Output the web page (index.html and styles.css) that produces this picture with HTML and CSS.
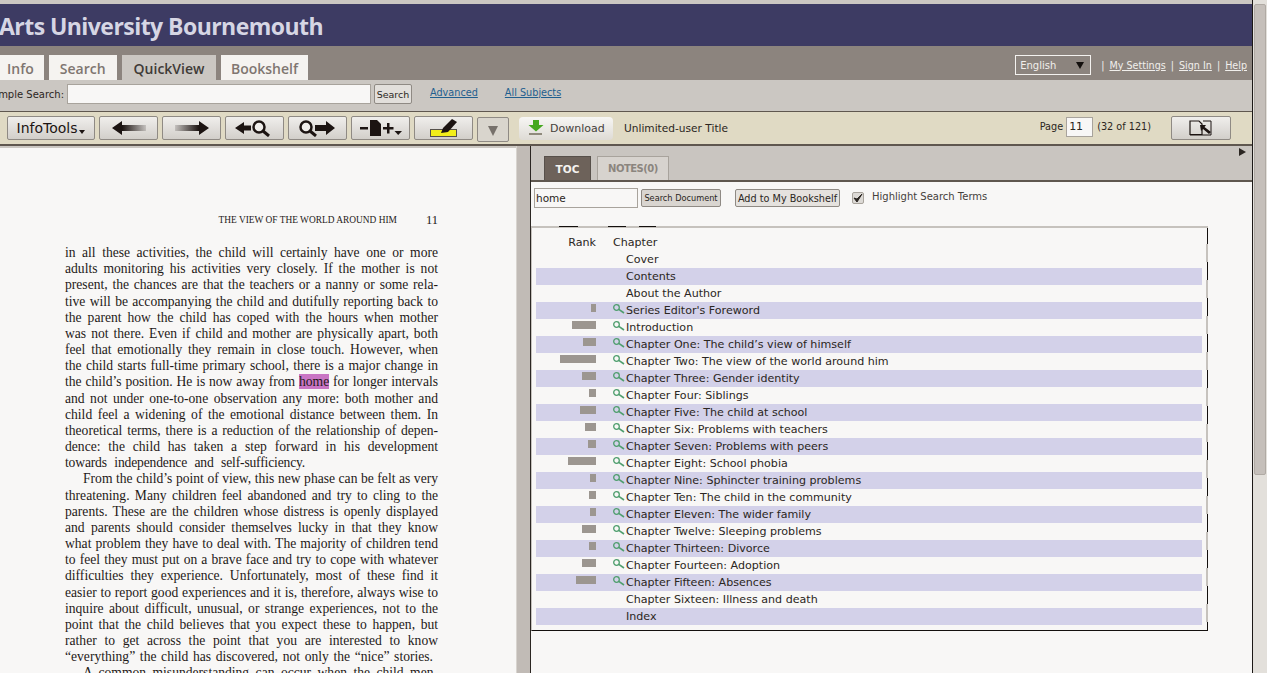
FILE: index.html
```html
<!DOCTYPE html>
<html lang="en">

<head>
    <meta charset="UTF-8">
    <title>Arts University Bournemouth - QuickView</title>
    <link rel="stylesheet" href="styles.css">
</head>

<body>
    <div id="app">
        <div id="main">
            <h1 class="banner">Arts University Bournemouth</h1>

            <div class="tabbar">
                <div class="tabs">
                    <a class="tab tab-first">Info</a>
                    <a class="tab">Search</a>
                    <a class="tab active">QuickView</a>
                    <a class="tab tab-last">Bookshelf</a>
                </div>
                <div class="userlinks">
                    <div class="lang"><span>English</span><i></i></div>
                    <span class="sep">|</span><a>My Settings</a>
                    <span class="sep">|</span><a>Sign In</a>
                    <span class="sep">|</span><a>Help</a>
                </div>
            </div>

            <div class="searchbar">
                <label class="simple">Simple Search:</label>
                <div class="field wide"></div>
                <button class="plain">Search</button>
                <a class="link adv">Advanced</a>
                <a class="link subj">All Subjects</a>
            </div>

            <div class="toolbar">
                <button class="tool infotools">InfoTools<i class="caret"></i></button>
                <button class="tool">
                    <svg width="34" height="16" viewBox="0 0 34 16"><defs><linearGradient id="fadeL"><stop offset="0.3" stop-color="#1c1412"/><stop offset="1" stop-color="#1c1412" stop-opacity="0.15"/></linearGradient></defs><path d="M0 8 10 1V5H34V11H10V15Z" fill="url(#fadeL)"/></svg>
                </button>
                <button class="tool">
                    <svg width="34" height="16" viewBox="0 0 34 16"><defs><linearGradient id="fadeR"><stop offset="0" stop-color="#1c1412" stop-opacity="0.15"/><stop offset="0.7" stop-color="#1c1412"/></linearGradient></defs><path d="M34 8 24 1V5H0V11H24V15Z" fill="url(#fadeR)"/></svg>
                </button>
                <button class="tool">
                    <svg width="40" height="18" viewBox="0 0 40 18"><path d="M0 9 9 3V6.500H16V11.500H9V15Z" fill="#1c1412"/><circle cx="24" cy="8" r="5.500" fill="#efedea" stroke="#1c1412" stroke-width="2.500"/><path d="M28 12 34 17" stroke="#1c1412" stroke-width="3"/></svg>
                </button>
                <button class="tool">
                    <svg width="40" height="18" viewBox="0 0 40 18"><circle cx="8" cy="8" r="5.500" fill="#efedea" stroke="#1c1412" stroke-width="2.500"/><path d="M12 12 18 17" stroke="#1c1412" stroke-width="3"/><path d="M37 9 28 2V6H17V12H28V16Z" fill="#1c1412"/></svg>
                </button>
                <button class="tool">
                    <svg width="42" height="18" viewBox="0 0 42 18"><path d="M0 8H8V10.500H0ZM10 1H17L21 5V17H10ZM23 8H27V4H29.500V8H33.500V10.500H29.500V14.500H27V10.500H23Z" fill="#1c1412"/><path d="M34.500 12H42L38.200 16Z" fill="#1c1412"/></svg>
                </button>
                <button class="tool">
                    <svg width="28" height="20" viewBox="0 0 28 20"><rect x="0.500" y="11.500" width="26" height="7" fill="#f2ee1a" stroke="#55504a"/><path d="M11 15 13 10 22 1 27 4 18 14Z" fill="#1c1412"/></svg>
                </button>
                <button class="tool more"><i></i></button>
                <button class="download">
                    <svg width="16" height="16" viewBox="0 0 16 16"><path d="M5 0H11V5H15.500L8 11.500 0.500 5H5Z" fill="#45a81e"/><rect x="1" y="13" width="13" height="2" fill="#8f8a7c"/></svg>
                    Download
                </button>
                <span class="license">Unlimited-user Title</span>
                <div class="pager">
                    <span>Page</span>
                    <div class="field pagenum">11</div>
                    <span>(32 of 121)</span>
                </div>
                <button class="tool popout">
                    <svg width="24" height="16" viewBox="0 0 24 16"><path d="M1 1H10L13 4V14.500H1Z" fill="none" stroke="#1c1412" stroke-width="1.200"/><path d="M1 15H22V1H14" fill="none" stroke="#1c1412"/><path d="M11 5H17L15.500 7 22 12 20 14 14 9 12 11Z" fill="#1c1412"/></svg>
                </button>
            </div>

            <div class="panes">
                <div class="book">
                    <div class="leaf">
                        <div class="runhead"><span>THE VIEW OF THE WORLD AROUND HIM</span><span class="folio">11</span></div>
                        <div class="ln">in all these activities, the child will certainly have one or more</div>
                        <div class="ln">adults monitoring his activities very closely. If the mother is not</div>
                        <div class="ln">present, the chances are that the teachers or a nanny or some rela-</div>
                        <div class="ln">tive will be accompanying the child and dutifully reporting back to</div>
                        <div class="ln">the parent how the child has coped with the hours when mother</div>
                        <div class="ln">was not there. Even if child and mother are physically apart, both</div>
                        <div class="ln">feel that emotionally they remain in close touch. However, when</div>
                        <div class="ln">the child starts full-time primary school, there is a major change in</div>
                        <div class="ln">the child’s position. He is now away from <mark>home</mark> for longer intervals</div>
                        <div class="ln">and not under one-to-one observation any more: both mother and</div>
                        <div class="ln">child feel a widening of the emotional distance between them. In</div>
                        <div class="ln">theoretical terms, there is a reduction of the relationship of depen-</div>
                        <div class="ln">dence: the child has taken a step forward in his development</div>
                        <div class="ln end-short">towards independence and self-sufficiency.</div>
                        <div class="ln indent">From the child’s point of view, this new phase can be felt as very</div>
                        <div class="ln">threatening. Many children feel abandoned and try to cling to the</div>
                        <div class="ln">parents. These are the children whose distress is openly displayed</div>
                        <div class="ln">and parents should consider themselves lucky in that they know</div>
                        <div class="ln">what problem they have to deal with. The majority of children tend</div>
                        <div class="ln">to feel they must put on a brave face and try to cope with whatever</div>
                        <div class="ln">difficulties they experience. Unfortunately, most of these find it</div>
                        <div class="ln">easier to report good experiences and it is, therefore, always wise to</div>
                        <div class="ln">inquire about difficult, unusual, or strange experiences, not to the</div>
                        <div class="ln">point that the child believes that you expect these to happen, but</div>
                        <div class="ln">rather to get across the point that you are interested to know</div>
                        <div class="ln end-long">“everything” the child has discovered, not only the “nice” stories.</div>
                        <div class="ln indent">A common misunderstanding can occur when the child men-</div>
                    </div>
                    <div class="book-scroll"></div>
                </div>

                <div class="side">
                    <div class="side-tabs">
                        <a class="stab on">TOC</a>
                        <a class="stab notes">NOTES(0)</a>
                        <i class="collapse"></i>
                    </div>
                    <div class="side-tools">
                        <div class="field docsearch">home</div>
                        <button class="plain searchdoc">Search Document</button>
                        <button class="plain addshelf">Add to My Bookshelf</button>
                        <span class="check"><svg width="10" height="10" viewBox="0 0 10 10"><path d="M1 5 4 9 9 1 4 6Z" fill="#2b2622" stroke="#2b2622"/></svg></span>
                        <span class="hl">Highlight Search Terms</span>
                    </div>
                    <div class="toc">
                        <div class="row head"><span class="rank">Rank</span><span class="chap">Chapter</span></div>
                        <div class="row"><span class="rank"></span><span class="title none">Cover</span></div>
                        <div class="row"><span class="rank"></span><span class="title none">Contents</span></div>
                        <div class="row"><span class="rank"></span><span class="title none">About the Author</span></div>
                        <div class="row"><span class="rank"><b style="width:5px"></b></span><svg class="mag"><use href="#mag"/></svg><span class="title">Series Editor's Foreword</span></div>
                        <div class="row"><span class="rank"><b style="width:24px"></b></span><svg class="mag"><use href="#mag"/></svg><span class="title">Introduction</span></div>
                        <div class="row"><span class="rank"><b style="width:13px"></b></span><svg class="mag"><use href="#mag"/></svg><span class="title">Chapter One: The child’s view of himself</span></div>
                        <div class="row"><span class="rank"><b style="width:36px"></b></span><svg class="mag"><use href="#mag"/></svg><span class="title">Chapter Two: The view of the world around him</span></div>
                        <div class="row"><span class="rank"><b style="width:14px"></b></span><svg class="mag"><use href="#mag"/></svg><span class="title">Chapter Three: Gender identity</span></div>
                        <div class="row"><span class="rank"><b style="width:7px"></b></span><svg class="mag"><use href="#mag"/></svg><span class="title">Chapter Four: Siblings</span></div>
                        <div class="row"><span class="rank"><b style="width:16px"></b></span><svg class="mag"><use href="#mag"/></svg><span class="title">Chapter Five: The child at school</span></div>
                        <div class="row"><span class="rank"><b style="width:11px"></b></span><svg class="mag"><use href="#mag"/></svg><span class="title">Chapter Six: Problems with teachers</span></div>
                        <div class="row"><span class="rank"><b style="width:8px"></b></span><svg class="mag"><use href="#mag"/></svg><span class="title">Chapter Seven: Problems with peers</span></div>
                        <div class="row"><span class="rank"><b style="width:28px"></b></span><svg class="mag"><use href="#mag"/></svg><span class="title">Chapter Eight: School phobia</span></div>
                        <div class="row"><span class="rank"><b style="width:6px"></b></span><svg class="mag"><use href="#mag"/></svg><span class="title">Chapter Nine: Sphincter training problems</span></div>
                        <div class="row"><span class="rank"><b style="width:7px"></b></span><svg class="mag"><use href="#mag"/></svg><span class="title">Chapter Ten: The child in the community</span></div>
                        <div class="row"><span class="rank"><b style="width:6px"></b></span><svg class="mag"><use href="#mag"/></svg><span class="title">Chapter Eleven: The wider family</span></div>
                        <div class="row"><span class="rank"><b style="width:14px"></b></span><svg class="mag"><use href="#mag"/></svg><span class="title">Chapter Twelve: Sleeping problems</span></div>
                        <div class="row"><span class="rank"><b style="width:7px"></b></span><svg class="mag"><use href="#mag"/></svg><span class="title">Chapter Thirteen: Divorce</span></div>
                        <div class="row"><span class="rank"><b style="width:14px"></b></span><svg class="mag"><use href="#mag"/></svg><span class="title">Chapter Fourteen: Adoption</span></div>
                        <div class="row"><span class="rank"><b style="width:20px"></b></span><svg class="mag"><use href="#mag"/></svg><span class="title">Chapter Fifteen: Absences</span></div>
                        <div class="row"><span class="rank"></span><span class="title none">Chapter Sixteen: Illness and death</span></div>
                        <div class="row"><span class="rank"></span><span class="title none">Index</span></div>
                    </div>
                </div>
            </div>
        </div>
        <div id="scrollbar"><div class="thumb"></div></div>
    </div>

    <svg class="defs" width="0" height="0">
        <symbol id="mag" viewBox="0 0 13 10">
            <circle cx="4.500" cy="3.500" r="2.800" fill="none" stroke="#4f9e6e" stroke-width="1.300"/>
            <path d="M6.800 5.300 12 9" stroke="#4f9e6e" stroke-width="1.600"/>
        </symbol>
    </svg>
</body>

</html>
```

FILE: styles.css
```css
html, body {
    margin: 0;
    height: 100%;
    overflow: hidden;
}

body {
    font-family: "DejaVu Sans", Verdana, sans-serif;
    font-size: 11px;
    color: #2b2622;
    background: #f8f7f6;
}

a {
    cursor: pointer;
}

#app {
    display: flex;
    height: 673px;
    overflow: hidden;
}

#main {
    width: 1252px;
    flex: none;
    display: flex;
    flex-direction: column;
    padding-top: 4px;
    background: #cbc7c2;
    overflow: hidden;
}

#scrollbar {
    flex: 1;
    padding: 4px 1px 0 1px;
    border-left: 1px solid #1c1816;
    background: #e3e0db;
}

#scrollbar .thumb {
    height: 469px;
    background: #c5bfba;
    border: 1px solid #b0aaa4;
    border-radius: 2px;
}

/* banner */
.banner {
    margin: 0;
    height: 42px;
    line-height: 44px;
    margin-left: -1px;
    font-family: "Open Sans", sans-serif;
    font-size: 23px;
    font-weight: 700;
    letter-spacing: -0.55px;
    color: #d6d6e4;
    background: #3d3b63;
    white-space: nowrap;
}

/* main tabs */
.tabbar {
    height: 34px;
    display: flex;
    justify-content: space-between;
    background: #8c847e;
}

.tabs {
    display: flex;
    gap: 5px;
    padding-top: 9px;
}

.tab {
    height: 25px;
    line-height: 27px;
    padding: 0 11px;
    font-family: "Open Sans", sans-serif;
    font-size: 14px;
    font-weight: 600;
    color: #7f7670;
    background: #f5f3f0;
}

.tab-first {
    padding: 0 10px 0 7px;
}

.tab-last {
    padding: 0 9.500px;
}

.tab.active {
    padding: 0 12px;
    color: #3f3b38;
    background: #cbc7c2;
}

.userlinks {
    display: flex;
    align-items: center;
    gap: 5px;
    padding: 4px 5px 0 0;
    color: #f1efec;
    font-size: 9.600px;
}

.userlinks a {
    text-decoration: underline;
}

.lang {
    width: 76px;
    height: 20px;
    box-sizing: border-box;
    margin-right: 5px;
    padding: 0 4px;
    display: flex;
    align-items: center;
    justify-content: space-between;
    border: 1px solid #f4f2ef;
    font-size: 10px;
}

.lang i {
    border: 4px solid transparent;
    border-top: 7px solid #14100e;
    border-bottom: 0;
    margin-right: 2px;
}

/* simple search */
.searchbar {
    height: 32px;
    display: flex;
    align-items: center;
    padding-bottom: 3px;
    box-sizing: border-box;
    border-bottom: 1px solid #5f574f;
}

.simple {
    margin-left: -11px;
    width: 78px;
    white-space: nowrap;
    font-size: 10px;
}

.field {
    box-sizing: border-box;
    background: #f8f7f6;
    border: 1px solid #a8a39c;
}

.wide {
    width: 304px;
    height: 20px;
}

.plain {
    height: 20px;
    padding: 0;
    font: 9.500px "DejaVu Sans", sans-serif;
    color: #2b2622;
    background: #e2dfdb;
    border: 1px solid #8f8a84;
    border-radius: 2px;
    white-space: nowrap;
}

.searchbar .plain {
    width: 38px;
    margin-left: 3px;
}

.link {
    margin-top: -4px;
    font-size: 9.700px;
    color: #1f5f8f;
    text-decoration: underline;
}

.adv {
    margin-left: 18px;
}

.subj {
    margin-left: 27px;
}

/* book toolbar */
.toolbar {
    height: 34px;
    box-sizing: border-box;
    display: flex;
    align-items: center;
    padding: 0 21px 0 7px;
    gap: 4px;
    background: #e0dac4;
    border-bottom: 2px solid #5f574f;
}

.tool {
    width: 59px;
    height: 24px;
    padding: 0;
    flex: none;
    display: flex;
    align-items: center;
    justify-content: center;
    background: linear-gradient(#f0eeec, #d2cfca);
    border: 1px solid #8f8a84;
    border-radius: 2px;
}

.infotools {
    width: 88px;
    font: 14px "DejaVu Sans", sans-serif;
    color: #1c1412;
}

.caret {
    margin: 8px 0 0 2px;
    border: 3.500px solid transparent;
    border-top: 4px solid #1c1412;
    border-bottom: 0;
}

.more {
    width: 32px;
    height: 25px;
    margin-top: 2px;
    background: #d9d5cd;
}

.more i {
    margin-top: 3px;
    border: 5px solid transparent;
    border-top: 10px solid #77716b;
    border-bottom: 0;
}

.download {
    width: 94px;
    height: 23px;
    margin-left: 6px;
    display: flex;
    align-items: center;
    gap: 6px;
    padding: 0 0 0 9px;
    font: 11px "DejaVu Sans", sans-serif;
    color: #45403b;
    background: linear-gradient(#f7f6f4, #dedbd5);
    border: 0;
    border-radius: 4px;
}

.license {
    margin-left: 7px;
    font-size: 10.600px;
}

.pager {
    margin-left: auto;
    display: flex;
    align-items: center;
    gap: 3px;
    margin-right: 16px;
    padding-bottom: 3px;
    font-size: 9.700px;
}

.pagenum {
    width: 27px;
    height: 20px;
    line-height: 18px;
    margin-right: 1px;
    padding-left: 2px;
    font-size: 11px;
}

.popout {
    width: 60px;
}

/* lower panes */
.panes {
    flex: 1;
    display: flex;
    min-height: 0;
}

.book {
    width: 530px;
    flex: none;
    display: flex;
    border-right: 1px solid #2b2622;
}

.leaf {
    width: 516px;
    box-sizing: border-box;
    padding: 61px 78px 0 65px;
    border-top: 2px solid #cbc7c2;
    background: #f8f7f6;
    font-family: "Liberation Serif", serif;
    font-size: 13.600px;
    line-height: 16.170px;
    color: #1f1a18;
    overflow: hidden;
}

.runhead {
    display: flex;
    justify-content: flex-end;
    align-items: center;
    height: 22px;
    margin-bottom: 14px;
    font-size: 9.400px;
}

.folio {
    margin-left: 29px;
    font-size: 12.500px;
}

.ln {
    text-align: justify;
    text-align-last: justify;
    white-space: nowrap;
}

.ln.end-short {
    padding-right: 133px;
    letter-spacing: -0.17px;
}

.ln.end-long {
    padding-right: 5px;
}

.ln.indent {
    padding-left: 18px;
}

mark {
    color: inherit;
    background: #c975c4;
}

.book-scroll {
    width: 14px;
    background: #c1bbb6;
    border-left: 1px solid #d8d4cf;
    box-sizing: border-box;
}

.side {
    flex: 1;
    background: #f8f7f6;
    min-width: 0;
}

.side-tabs {
    height: 36px;
    box-sizing: border-box;
    display: flex;
    align-items: flex-end;
    gap: 6px;
    padding-left: 13px;
    position: relative;
    background: #c9c5c0;
    border-bottom: 2px solid #5f574f;
}

.stab {
    width: 47px;
    height: 24px;
    box-sizing: border-box;
    line-height: 24px;
    text-align: center;
    font-size: 10.500px;
    font-weight: 700;
    color: #8b857e;
    background: #d7d3ce;
    border: 1px solid #a8a39c;
    border-bottom: 0;
}

.stab.on {
    color: #f5f3f0;
    background: #6d625a;
    border-color: #57504a;
}

.stab.notes {
    width: 72px;
    font-size: 10px;
    letter-spacing: -0.5px;
}

.collapse {
    position: absolute;
    right: 6px;
    top: 2px;
    border: 4px solid transparent;
    border-left: 7px solid #2b2622;
    border-right: 0;
}

.side-tools {
    height: 44px;
    box-sizing: border-box;
    display: flex;
    align-items: flex-start;
    padding: 6px 0 0 3px;
    font-size: 10px;
}

.docsearch {
    width: 104px;
    height: 20px;
    line-height: 18px;
    padding-left: 1px;
    font-size: 10.500px;
}

.searchdoc {
    width: 80px;
    height: 18px;
    margin: 1px 0 0 3px;
    font-size: 8.200px;
    background: #d9d5d0;
}

.addshelf {
    width: 105px;
    height: 18px;
    margin: 1px 0 0 14px;
    font-size: 9.700px;
    background: #e5e2de;
}

.check {
    width: 12px;
    height: 12px;
    margin: 4px 0 0 12px;
    display: flex;
    align-items: center;
    justify-content: center;
    background: #dcd9d5;
    border: 1px solid #a8a39c;
    border-radius: 2px;
    box-sizing: border-box;
}

.hl {
    margin: 3px 0 0 8px;
    color: #45403b;
}

/* table of contents */
.toc {
    width: 677px;
    height: 405px;
    box-sizing: border-box;
    padding: 8px 6px 0 4px;
    border-bottom: 1px solid #14100e;
    border-left: 1px solid #c6c2bd;
    background:
        linear-gradient(90deg, transparent 27px, #14100e 27px 46px, transparent 46px 76px, #14100e 76px 94px, transparent 94px 107px, #14100e 107px 124px, transparent 124px) top / 100% 1px no-repeat,
        linear-gradient(#c6c2bd, #c6c2bd) top / 100% 2px no-repeat,
        repeating-linear-gradient(transparent 0 18px, #c6c2bd 18px 36px) right / 2px 100% no-repeat,
        repeating-linear-gradient(#14100e 0 18px, transparent 18px 36px) right / 1px 100% no-repeat;
}

.row {
    height: 17px;
    line-height: 17px;
    display: flex;
    width: 666px;
    font-size: 11.100px;
    white-space: nowrap;
}

.row:nth-child(odd):not(.head) {
    background: #d3d1e9;
}

.rank {
    width: 60px;
    flex: none;
    display: flex;
    justify-content: flex-end;
    align-items: flex-start;
}

.rank b {
    display: block;
    height: 8px;
    margin-top: 2px;
    background: #9c9690;
}

.chap {
    margin-left: 17px;
}

.mag {
    width: 13px;
    height: 10px;
    margin: 2px 1px 0 16px;
    flex: none;
}

.title.none {
    margin-left: 30px;
}

.defs {
    position: absolute;
}
```
